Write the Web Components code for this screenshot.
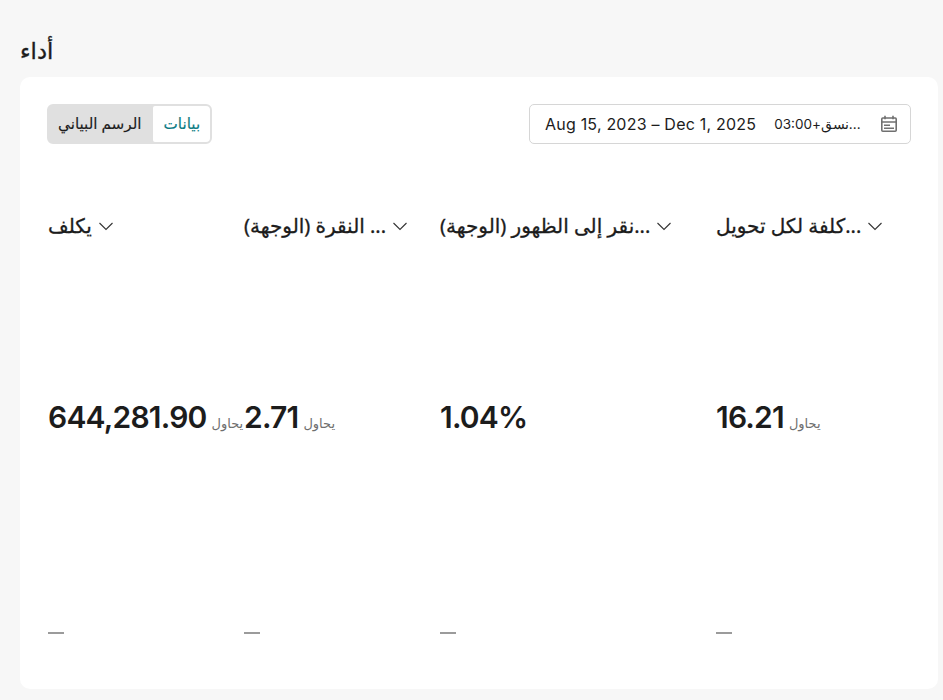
<!doctype html>
<html lang="ar">
<head>
<meta charset="utf-8">
<title>أداء</title>
<style>
html, body { margin: 0; height: 100%; }
body { background: #f7f7f7; font-family: "Noto Sans", "DejaVu Sans", sans-serif; color: #1c1c1c; overflow: hidden; }
</style>
</head>
<body>
<perf-page heading="أداء">
  <perf-toolbar slot="toolbar">
    <view-toggle></view-toggle>
    <date-range range="Aug 15, 2023 – Dec 1, 2025" zone="...نسق+03:00"></date-range>
  </perf-toolbar>
  <metric-col style="--w:196px" label="يكلف" value="644,281.90" note="يحاول"></metric-col>
  <metric-col style="--w:196px" label="... النقرة (الوجهة)" value="2.71" note="يحاول"></metric-col>
  <metric-col style="--w:276px" label="...نقر إلى الظهور (الوجهة)" value="1.04%"></metric-col>
  <metric-col style="--w:195px" label="...كلفة لكل تحويل" value="16.21" note="يحاول"></metric-col>
</perf-page>

<script>
customElements.define('perf-page', class extends HTMLElement {
    constructor() {
        super()
        let sr = this.attachShadow({mode: 'open'})
        sr.innerHTML = `
<style>
:host { display: block; padding: 38px 5px 0 20px; }
h1 { margin: 0; height: 39px; font: 400 22.6px/26px "Noto Sans", "DejaVu Sans", sans-serif; -webkit-text-stroke: .35px currentColor; }
#card {
  height: 612px;
  box-sizing: border-box;
  background: #fff;
  border-radius: 10px;
  padding: 27px 27px 0 28px;
}
#cols { display: flex; margin-top: 67px; }
</style>
<h1></h1>
<div id="card">
  <slot name="toolbar"></slot>
  <div id="cols"><slot></slot></div>
</div>`
        sr.querySelector('h1').textContent = this.getAttribute('heading')
    }
})

customElements.define('perf-toolbar', class extends HTMLElement {
    constructor() {
        super()
        this.attachShadow({mode: 'open'}).innerHTML = `
<style>
:host { display: flex; justify-content: space-between; align-items: center; height: 40px; margin-left: -1px; }
</style>
<slot></slot>`
    }
})

customElements.define('view-toggle', class extends HTMLElement {
    constructor() {
        super()
        this.attachShadow({mode: 'open'}).innerHTML = `
<style>
:host {
  display: flex;
  box-sizing: border-box;
  height: 40px;
  border: 2px solid #e0e0e0;
  border-radius: 6px;
  background: #e0e0e0;
  font: 400 15.2px/1 "Noto Sans", "DejaVu Sans", sans-serif;
  -webkit-text-stroke: .15px currentColor;
  overflow: hidden;
}
span { display: flex; align-items: center; padding: 0 11px 0 9px; }
#chart { color: #1c1c1c; }
#data { background: #fff; color: #0a7b83; border-radius: 2px; padding: 0 10px 0 11px; }
</style>
<span id="chart">الرسم البياني</span>
<span id="data">بيانات</span>`
    }
})

customElements.define('date-range', class extends HTMLElement {
    constructor() {
        super()
        let sr = this.attachShadow({mode: 'open'})
        sr.innerHTML = `
<style>
:host {
  display: flex;
  align-items: center;
  box-sizing: border-box;
  width: 382px;
  height: 40px;
  padding: 0 12px 0 15px;
  border: 1px solid #d6d6d6;
  border-radius: 5px;
  font-family: "Inter", sans-serif;
  color: #1c1c1c;
}
#range { font-size: 16px; letter-spacing: .21px; white-space: nowrap; }
#zone { margin-left: 18px; font-size: 13.5px; flex: 1; text-align: left; }
svg { display: block; }
</style>
<span id="range"></span>
<span id="zone"><bdi dir="rtl"></bdi></span>
<svg width="18" height="18" viewBox="0 0 18 18" fill="none" stroke="#707070" stroke-width="1.6">
  <rect x="1.8" y="3" width="14.4" height="13.2" rx="1"/>
  <path d="M1.8 7h14.4M5 .8v3.4M13 .8v3.4"/>
  <path d="M4 10.2h6M4 13.2h10" stroke-width="1.4"/>
</svg>`
        sr.querySelector('#range').textContent = this.getAttribute('range')
        sr.querySelector('bdi').textContent = this.getAttribute('zone')
    }
})

customElements.define('metric-col', class extends HTMLElement {
    constructor() {
        super()
        let sr = this.attachShadow({mode: 'open'})
        sr.innerHTML = `
<style>
:host { display: block; flex: none; width: var(--w); }
#head { display: flex; align-items: center; gap: 7px; height: 30px; font: 400 20px/30px "Noto Sans", "DejaVu Sans", sans-serif; -webkit-text-stroke: .3px currentColor; white-space: nowrap; }
#head svg { flex: none; }
#val { display: flex; align-items: baseline; margin-top: 156px; height: 40px; white-space: nowrap; }
#num { font: 600 30px/40px "Inter", sans-serif; color: #1c1c1c; letter-spacing: -.8px; -webkit-text-stroke: 0; }
#note { margin-left: 5px; font: 13px/1 "Noto Sans", "DejaVu Sans", sans-serif; color: #6e6e6e; }
#dash { width: 16px; height: 2px; background: #9b9b9b; margin-top: 195px; }
</style>
<div id="head">
  <span id="label" dir="rtl"></span>
  <svg width="14" height="14" viewBox="0 0 14 14" fill="none" stroke="#333" stroke-width="1.1"><path d="M.5 4 7 10.5 13.5 4"/></svg>
</div>
<div id="val"><span id="num"></span><span id="note"></span></div>
<div id="dash"></div>`
        sr.querySelector('#label').textContent = this.getAttribute('label')
        sr.querySelector('#num').textContent = this.getAttribute('value')
        sr.querySelector('#note').textContent = this.getAttribute('note') || ''
    }
})
</script>
</body>
</html>
